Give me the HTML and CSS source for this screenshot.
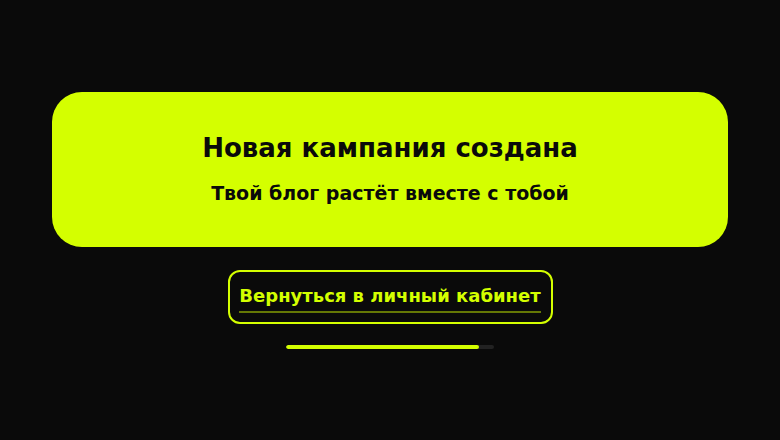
FILE: index.html
```html
<!DOCTYPE html>
<html lang="ru">
<head>
<meta charset="utf-8">
<link rel="stylesheet" href="styles.css">
</head>
<body>
<main class="screen">
  <section class="card">
    <h1 class="title">Новая кампания создана</h1>
    <p class="subtitle">Твой блог растёт вместе с тобой</p>
  </section>
  <a class="back-btn" href="#"><span class="back-label">Вернуться в личный кабинет</span></a>
  <div class="progress"><div class="progress-fill"></div></div>
</main>
</body>
</html>
```
FILE: styles.css
```css
* { box-sizing: border-box; }
html, body { margin: 0; padding: 0; }
body {
  background: #0a0a0a;
  font-family: "DejaVu Sans", "Noto Sans", sans-serif;
  width: 780px;
  height: 440px;
  overflow: hidden;
}
.screen {
  height: 440px;
  display: flex;
  flex-direction: column;
  align-items: center;
  padding-top: 92px;
}
.card {
  width: 676px;
  height: 155px;
  background: #d4ff00;
  border-radius: 30px;
  display: flex;
  flex-direction: column;
  align-items: center;
  justify-content: center;
  gap: 18px;
  padding-bottom: 4px;
}
.title {
  margin: 0;
  font-size: 26px;
  font-weight: 700;
  color: #0a0a0a;
  line-height: 32px;
  letter-spacing: 0;
}
.subtitle {
  margin: 0;
  font-size: 19px;
  font-weight: 700;
  color: #0a0a0a;
  line-height: 22px;
}
.back-btn {
  margin-top: 23px;
  width: 325px;
  height: 54px;
  border: 2px solid #d4ff00;
  border-radius: 12px;
  display: flex;
  align-items: center;
  justify-content: center;
  text-decoration: none;
}
.back-label {
  color: #d4ff00;
  font-size: 18px;
  font-weight: 700;
  line-height: 24px;
  padding-bottom: 3px;
  border-bottom: 2px solid rgba(212, 255, 0, 0.45);
  margin-top: 2px;
}
.progress {
  margin-top: 21px;
  width: 208px;
  height: 4px;
  background: #222222;
  border-radius: 2px;
  overflow: hidden;
}
.progress-fill {
  width: 193px;
  height: 100%;
  background: #d4ff00;
  border-radius: 2px;
}
```
